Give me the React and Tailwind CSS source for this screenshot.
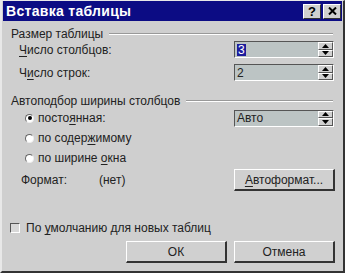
import React from "react";

const font = { fontFamily: '"Liberation Sans", Arial, sans-serif' };

function U({ children }) {
  return <span className="underline underline-offset-2">{children}</span>;
}

function Spin({ children }) {
  return (
    <div className="w-[100px] h-[17px] flex border-t border-l border-t-[#555] border-l-[#555] border-b border-r border-b-white border-r-white bg-[#bcc4c4]">
      <div className="flex-1 flex items-center pl-[2px] text-[12px] text-[#222] leading-none">{children}</div>
      <div className="w-[15px] flex flex-col bg-[#d0d0d0]">
        <div className="flex-1 flex items-center justify-center border-t border-l border-white border-b border-r border-b-[#555] border-r-[#555]">
          <svg width="7" height="4" viewBox="0 0 7 4"><polygon points="3.5,0 7,4 0,4" fill="#000" /></svg>
        </div>
        <div className="flex-1 flex items-center justify-center border-t border-l border-white border-b border-r border-b-[#555] border-r-[#555]">
          <svg width="7" height="4" viewBox="0 0 7 4"><polygon points="0,0 7,0 3.5,4" fill="#000" /></svg>
        </div>
      </div>
    </div>
  );
}

function Btn({ children, w = "w-[101px]" }) {
  return (
    <div className={`${w} h-[22px] flex items-center justify-center bg-[#d0d0d0] border-t border-l border-t-white border-l-white border-b-2 border-r-2 border-b-[#333] border-r-[#333] text-[12px] text-[#222]`}>
      {children}
    </div>
  );
}

function GroupLabel({ children }) {
  return (
    <div className="h-[14px] flex items-center gap-[6px] pl-[9px] pr-[10px]">
      <span className="text-[12px] text-[#222] whitespace-nowrap">{children}</span>
      <div className="flex-1 border-t border-t-[#999] border-b border-b-white" />
    </div>
  );
}

function Radio({ checked }) {
  return (
    <div className="w-[9px] h-[9px] rounded-full bg-white border border-t-[#666] border-l-[#666] border-b-[#eee] border-r-[#eee] flex items-center justify-center">
      {checked && <div className="w-[4px] h-[4px] rounded-full bg-black" />}
    </div>
  );
}

export default function App() {
  return (
    <div style={font} className="w-[345px] h-[273px] bg-[#cfcfcf] border-l-2 border-t border-t-[#e8e8e8] border-l-[#e8e8e8] border-r-2 border-b-2 border-r-[#333] border-b-[#333] flex flex-col">
      <div className="h-[20px] mx-[1px] bg-[#0c0c84] flex items-center pl-[3px] pr-[1px]">
        <span className="text-white font-bold text-[14px] tracking-[0.3px]">Вставка таблицы</span>
        <div className="ml-auto flex gap-[2px]">
          <div className="w-[18px] h-[15px] bg-[#d0d0d0] border-t border-l border-white border-b border-r border-b-[#333] border-r-[#333] flex items-center justify-center font-bold text-[13px] text-black leading-none">?</div>
          <div className="w-[18px] h-[15px] bg-[#d0d0d0] border-t border-l border-white border-b border-r border-b-[#333] border-r-[#333] flex items-center justify-center">
            <svg width="9" height="8" viewBox="0 0 9 8"><path d="M1 0.5 L8 7.5 M8 0.5 L1 7.5" stroke="#000" strokeWidth="2" /></svg>
          </div>
        </div>
      </div>
      <div className="flex flex-col pt-[6px]">
        <GroupLabel>Размер таблицы</GroupLabel>
        <div className="h-[17px] flex items-center pl-[17px] pr-[9px]">
          <span className="text-[12px] text-[#222]"><U>Ч</U>исло столбцов:</span>
          <div className="ml-auto">
            <Spin><span className="bg-[#1c1c9c] text-white px-[1px]">3</span></Spin>
          </div>
        </div>
        <div className="h-[17px] mt-[6px] flex items-center pl-[17px] pr-[9px]">
          <span className="text-[12px] text-[#222]">Ч<U>и</U>сло строк:</span>
          <div className="ml-auto"><Spin>2</Spin></div>
        </div>
        <div className="mt-[13px]">
          <GroupLabel>Автоподбор ширины столбцов</GroupLabel>
        </div>
        <div className="h-[20px] flex items-center pl-[23px] pr-[9px]">
          <Radio checked />
          <span className="ml-[4px] text-[12px] text-[#222]">посто<U>я</U>нная:</span>
          <div className="ml-auto"><Spin>Авто</Spin></div>
        </div>
        <div className="h-[20px] flex items-center pl-[23px]">
          <Radio />
          <span className="ml-[4px] text-[12px] text-[#222]">по содер<U>ж</U>имому</span>
        </div>
        <div className="h-[20px] flex items-center pl-[23px]">
          <Radio />
          <span className="ml-[4px] text-[12px] text-[#222]">по ширине <U>о</U>кна</span>
        </div>
        <div className="h-[22px] mt-[1px] flex items-center pl-[19px] pr-[8px]">
          <span className="w-[78px] text-[12px] text-[#222]">Формат:</span>
          <span className="text-[12px] text-[#222]">(нет)</span>
          <div className="ml-auto"><Btn><span><U>А</U>втоформат...</span></Btn></div>
        </div>
        <div className="h-[14px] mt-[30px] flex items-center pl-[8px]">
          <div className="w-[10px] h-[10px] bg-[#d8d8d8] border border-t-[#555] border-l-[#555] border-b-white border-r-white" />
          <span className="ml-[6px] text-[12px] text-[#222]">По <U>у</U>молчанию для новых таблиц</span>
        </div>
        <div className="h-[22px] mt-[6px] flex justify-end gap-[7px] pr-[8px]">
          <Btn w="w-[101px]">ОК</Btn>
          <Btn w="w-[101px]">Отмена</Btn>
        </div>
      </div>
    </div>
  );
}
